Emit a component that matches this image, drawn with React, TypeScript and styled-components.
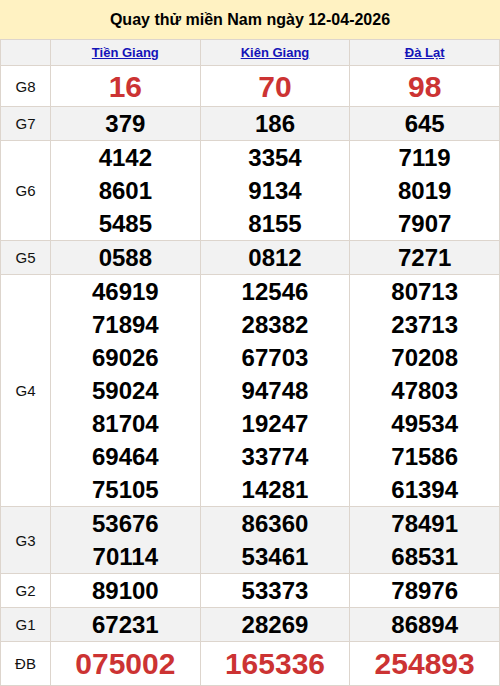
import React from "react";
import styled, { createGlobalStyle } from "styled-components";

const Global = createGlobalStyle`
  html, body { margin: 0; padding: 0; background: #fff; }
  body { font-family: "Liberation Sans", Arial, sans-serif; color: #000; }
  table { font-family: "Liberation Sans", Arial, sans-serif; }
`;

const Wrap = styled.div`
  width: 500px;
`;

const Title = styled.div`
  height: 39px;
  background: #fff2c2;
  display: flex;
  align-items: center;
  justify-content: center;
  font-size: 16px;
  font-weight: bold;
`;

const Table = styled.table`
  width: 500px;
  border-collapse: collapse;
  table-layout: fixed;
`;

const Row = styled.tr<{ $alt?: boolean }>`
  background: ${(p) => (p.$alt ? "#f2f2f2" : "#fff")};
`;

const HeadCell = styled.th`
  border: 1px solid #ddd5cd;
  height: 25px;
  padding: 0;
  font-size: 13px;
  font-weight: bold;
  text-align: center;
  a { color: #1414b8; text-decoration: underline; }
`;

const LabelCell = styled.td`
  border: 1px solid #ddd5cd;
  padding: 0;
  font-size: 15px;
  font-weight: normal;
  color: #111;
  text-align: center;
  width: 49px;
`;

const NumCell = styled.td<{ $big?: boolean; $h?: number }>`
  border: 1px solid #ddd5cd;
  padding: 0;
  text-align: center;
  font-weight: bold;
  font-size: ${(p) => (p.$big ? "30px" : "24px")};
  color: ${(p) => (p.$big ? "#cc3333" : "#000")};
  height: ${(p) => p.$h ?? 33}px;
`;

const Line = styled.div`
  line-height: 33px;
`;

const cols = ["Tiền Giang", "Kiên Giang", "Đà Lạt"];

type Prize = { label: string; nums: string[][]; big?: boolean; h?: number };

const prizes: Prize[] = [
  { label: "G8", nums: [["16"], ["70"], ["98"]], big: true, h: 40 },
  { label: "G7", nums: [["379"], ["186"], ["645"]] },
  { label: "G6", nums: [["4142", "8601", "5485"], ["3354", "9134", "8155"], ["7119", "8019", "7907"]] },
  { label: "G5", nums: [["0588"], ["0812"], ["7271"]] },
  {
    label: "G4",
    nums: [
      ["46919", "71894", "69026", "59024", "81704", "69464", "75105"],
      ["12546", "28382", "67703", "94748", "19247", "33774", "14281"],
      ["80713", "23713", "70208", "47803", "49534", "71586", "61394"],
    ],
  },
  { label: "G3", nums: [["53676", "70114"], ["86360", "53461"], ["78491", "68531"]] },
  { label: "G2", nums: [["89100"], ["53373"], ["78976"]] },
  { label: "G1", nums: [["67231"], ["28269"], ["86894"]] },
  { label: "ĐB", nums: [["075002"], ["165336"], ["254893"]], big: true, h: 43 },
];

export default function App() {
  return (
    <Wrap>
      <Global />
      <Title>Quay thử miền Nam ngày 12-04-2026</Title>
      <Table>
        <thead>
          <Row $alt>
            <HeadCell style={{ width: 49 }}></HeadCell>
            {cols.map((c) => (
              <HeadCell key={c}>
                <a href="#">{c}</a>
              </HeadCell>
            ))}
          </Row>
        </thead>
        <tbody>
          {prizes.map((p, i) => (
            <Row key={p.label} $alt={i % 2 === 1}>
              <LabelCell>{p.label}</LabelCell>
              {p.nums.map((list, j) => (
                <NumCell key={j} $big={p.big} $h={p.h}>
                  {list.map((n, k) => (
                    <Line key={k}>{n}</Line>
                  ))}
                </NumCell>
              ))}
            </Row>
          ))}
        </tbody>
      </Table>
    </Wrap>
  );
}
